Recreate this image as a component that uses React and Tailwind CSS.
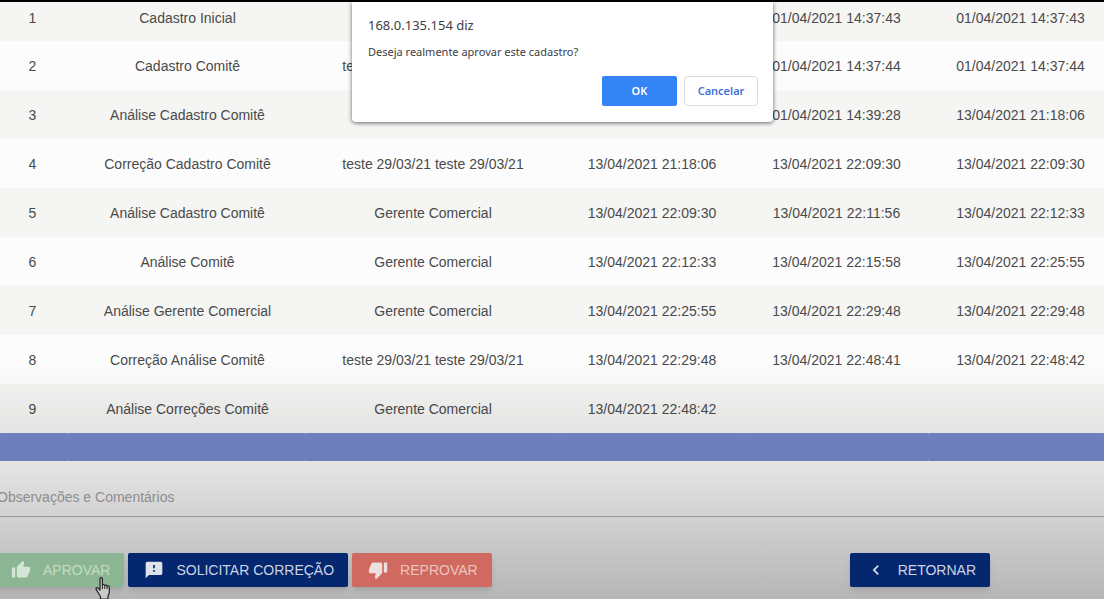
import React from 'react';
import { MdThumbUp, MdThumbDown, MdFeedback, MdChevronLeft } from 'react-icons/md';

const rows = [
  ['1', 'Cadastro Inicial', '', '', '01/04/2021 14:37:43', '01/04/2021 14:37:43'],
  ['2', 'Cadastro Comitê', 'teste 29/03/21 teste 29/03/21', '', '01/04/2021 14:37:44', '01/04/2021 14:37:44'],
  ['3', 'Análise Cadastro Comitê', '', '', '01/04/2021 14:39:28', '13/04/2021 21:18:06'],
  ['4', 'Correção Cadastro Comitê', 'teste 29/03/21 teste 29/03/21', '13/04/2021 21:18:06', '13/04/2021 22:09:30', '13/04/2021 22:09:30'],
  ['5', 'Análise Cadastro Comitê', 'Gerente Comercial', '13/04/2021 22:09:30', '13/04/2021 22:11:56', '13/04/2021 22:12:33'],
  ['6', 'Análise Comitê', 'Gerente Comercial', '13/04/2021 22:12:33', '13/04/2021 22:15:58', '13/04/2021 22:25:55'],
  ['7', 'Análise Gerente Comercial', 'Gerente Comercial', '13/04/2021 22:25:55', '13/04/2021 22:29:48', '13/04/2021 22:29:48'],
  ['8', 'Correção Análise Comitê', 'teste 29/03/21 teste 29/03/21', '13/04/2021 22:29:48', '13/04/2021 22:48:41', '13/04/2021 22:48:42'],
  ['9', 'Análise Correções Comitê', 'Gerente Comercial', '13/04/2021 22:48:42', '', ''],
];

const HistoryTable = () => (
  <table className="w-full table-fixed border-separate border-spacing-0 text-center text-sm text-[#4a4a4a]">
    <colgroup>
      <col className="w-[69px]" />
      <col className="w-[237px]" />
      <col className="w-[254px]" />
      <col className="w-[184px]" />
      <col className="w-[185px]" />
      <col className="w-[175px]" />
    </colgroup>
    <tbody>
      {rows.map((row) => (
        <tr
          key={row[0]}
          className="h-[49px] odd:bg-[#f5f5f4] even:bg-[#fcfcfc] first:h-[39px] first:align-top"
        >
          {row.map((cell, i) => (
            <td key={i} className="whitespace-nowrap py-1.5 first:pr-1 last:pl-2">
              {cell}
            </td>
          ))}
        </tr>
      ))}
    </tbody>
    <tfoot>
      <tr className="h-7">
        {rows[0].map((_, i) => (
          <td key={i} className="rounded-[1px] bg-[#7789cc]" />
        ))}
      </tr>
    </tfoot>
  </table>
);

const ActionButton = ({ icon: Icon, iconClass, className, children }) => (
  <button
    type="button"
    className={`flex h-[34px] items-center gap-3 rounded-xs pl-4 pr-3.5 text-sm shadow-md ${className}`}
  >
    <Icon className={`size-5 ${iconClass}`} />
    {children}
  </button>
);

const ConfirmDialog = () => (
  <div
    role="dialog"
    aria-labelledby="dialog-title"
    className="absolute left-1/2 top-0 z-30 h-[120px] w-[421px] -translate-x-[200px] rounded-b-sm bg-white pl-4 pr-[15px] pt-[13px] font-['Noto_Sans',sans-serif] text-[#3c4043] shadow-[0_1px_4px_rgba(0,0,0,0.6)]"
  >
    <h2 id="dialog-title" className="text-[13px] leading-5">168.0.135.154 diz</h2>
    <p className="mt-[9px] text-[11px] leading-4">Deseja realmente aprovar este cadastro?</p>
    <div className="mt-4 flex justify-end gap-[7px] text-[11px] font-semibold">
      <button type="button" className="h-[30px] w-[75px] rounded-xs bg-[#3484f5] text-white">OK</button>
      <button type="button" className="h-[30px] w-[74px] rounded-sm border border-[#dadce0] text-[#4272dc]">Cancelar</button>
    </div>
  </div>
);

const HandCursor = () => (
  <svg viewBox="0 0 18 24" className="pointer-events-none absolute left-[100px] top-6 h-6 w-[18px]">
    <path
      d="M5 1.8c0-1.6 2.4-1.6 2.4 0v6.4c.3-1 2.2-.9 2.4.3.5-.8 2.2-.6 2.3.6.7-.7 2.2-.2 2.2 1.1v5.2c0 1.5-1.3 2.6-1.3 4.2V22H5.5v-2c0-1.3-1.5-2.6-2.3-4.2L1.2 12.4c-.7-1.5 1-2.3 2-1.2L5 13.2z"
      fill="#c9cbc9"
      stroke="#222"
      strokeWidth="1.2"
      strokeLinejoin="round"
    />
    <path d="M7.4 8v4M9.8 8.5V12M12.1 9.2V12" stroke="#222" strokeWidth="1" />
  </svg>
);

export default function App() {
  return (
    <div className="relative min-h-screen overflow-hidden border-t-2 border-black bg-[#fcfcfc] font-['Liberation_Sans',sans-serif]">
      <ConfirmDialog />
      <main>
        <HistoryTable />
        <form className="-ml-[3px]">
          <input
            type="text"
            aria-label="Observações e Comentários"
            placeholder="Observações e Comentários"
            className="mt-5 block h-9 w-full border-b border-[#b5b5b5] pb-1 text-sm outline-none placeholder:text-[#a5a5a5]"
          />
          <div className="relative z-20 -ml-0.5 mt-9 flex gap-1 pr-[114px]">
            <ActionButton icon={MdThumbUp} iconClass="text-[#d3e6d6]" className="bg-[#8cb693] text-[#c3dbc6]">
              APROVAR
            </ActionButton>
            <ActionButton icon={MdFeedback} iconClass="text-[#dfe2ea]" className="bg-[#04276f] text-[#cdd4e3]">
              SOLICITAR CORREÇÃO
            </ActionButton>
            <ActionButton icon={MdThumbDown} iconClass="text-[#eee0dc]" className="bg-[#d0695f] text-[#eac6be]">
              REPROVAR
            </ActionButton>
            <ActionButton icon={MdChevronLeft} iconClass="text-[#dfe2ea]" className="ml-auto bg-[#04276f] text-[#cdd4e3]">
              RETORNAR
            </ActionButton>
            <HandCursor />
          </div>
        </form>
      </main>
      {/* bottom shade */}
      <div className="pointer-events-none absolute inset-x-0 bottom-0 z-10 h-60 bg-linear-to-b from-transparent via-black/10 via-45% to-black/28" />
    </div>
  );
}
